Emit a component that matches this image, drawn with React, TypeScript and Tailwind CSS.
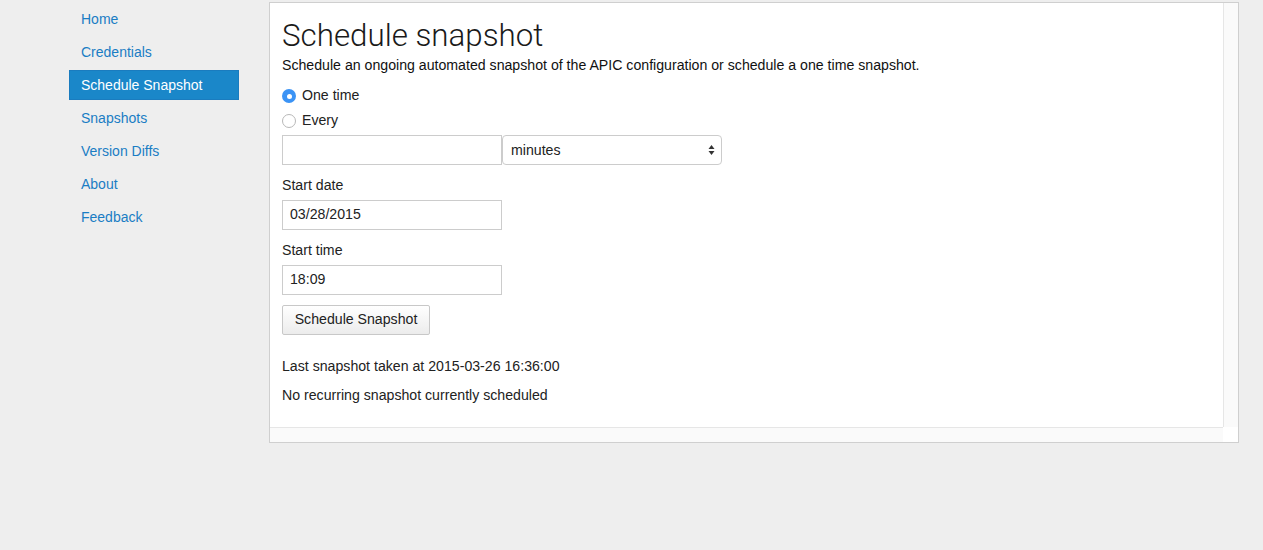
import React from "react";

const navItems = ["Home", "Credentials", "Schedule Snapshot", "Snapshots", "Version Diffs", "About", "Feedback"];

export default function App() {
  return (
    <div className="w-[1263px] h-[550px] bg-[#eeeeee] flex items-start text-[14px] text-[#222]" style={{ fontFamily: '"Liberation Sans", Arial, sans-serif' }}>
      <nav className="w-[170px] ml-[69px] mt-[4px] flex flex-col gap-[3px]">
        {navItems.map((n) =>
          n === "Schedule Snapshot" ? (
            <div key={n} className="h-[30px] flex items-center pl-[11px] bg-[#1a87c9] text-white border border-[#1a7cbf]">
              {n}
            </div>
          ) : (
            <div key={n} className="h-[30px] flex items-center pl-[12px] text-[#1a7dc4]">
              {n}
            </div>
          )
        )}
      </nav>
      <div className="ml-[30px] mt-[2px] w-[970px] h-[441px] border border-[#cfcfcf] grid grid-cols-[1fr_15px] grid-rows-[1fr_15px] bg-white">
        <div className="bg-white pl-[12px] pt-[15px] text-[14.15px]">
          <h1 className="text-[31.3px] leading-[35px] font-light text-[#1a1a1a]" style={{ fontFamily: 'Roboto, "Liberation Sans", Arial, sans-serif' }}>
            Schedule snapshot
          </h1>
          <p className="mt-[3px] leading-[18px] text-[#111]">Schedule an ongoing automated snapshot of the APIC configuration or schedule a one time snapshot.</p>
          <div className="mt-[13px] flex items-center h-[18px] gap-[6px]">
            <span className="w-[14px] h-[14px] rounded-full bg-[#3b93f5] flex items-center justify-center">
              <span className="w-[5px] h-[5px] rounded-full bg-white" />
            </span>
            <span>One time</span>
          </div>
          <div className="mt-[7px] flex items-center h-[18px] gap-[6px]">
            <span className="w-[14px] h-[14px] rounded-full bg-white border border-[#b8b8b8]" />
            <span>Every</span>
          </div>
          <div className="mt-[5px] flex">
            <div className="w-[220px] h-[30px] border border-[#cccccc] bg-white" />
            <div className="w-[220px] h-[30px] border border-[#cccccc] rounded-[4px] bg-white flex items-center justify-between pl-[8px] pr-[6px]">
              <span className="mt-[1px]">minutes</span>
              <svg width="7" height="12" viewBox="0 0 7 12">
                <path d="M3.5 1 L6.5 5 L0.5 5 Z" fill="#333" />
                <path d="M3.5 11 L6.5 7 L0.5 7 Z" fill="#333" />
              </svg>
            </div>
          </div>
          <div className="mt-[11px] leading-[18px]">Start date</div>
          <div className="mt-[6px] w-[220px] h-[30px] border border-[#cccccc] flex items-center pl-[7px] text-[#222]">03/28/2015</div>
          <div className="mt-[11px] leading-[18px]">Start time</div>
          <div className="mt-[6px] w-[220px] h-[30px] border border-[#cccccc] flex items-center pl-[7px] text-[#222]">18:09</div>
          <button className="mt-[10px] w-[148px] h-[30px] border border-[#c8c8c8] rounded-[2px] bg-gradient-to-b from-white to-[#ececec] text-[#222] flex items-center justify-center">
            Schedule Snapshot
          </button>
          <div className="mt-[22px] leading-[18px]">Last snapshot taken at 2015-03-26 16:36:00</div>
          <div className="mt-[11px] leading-[18px]">No recurring snapshot currently scheduled</div>
        </div>
        <div className="bg-[#fafafa] border-l border-[#e6e6e6]" />
        <div className="bg-[#fafafa] border-t border-[#e6e6e6]" />
        <div className="bg-white" />
      </div>
    </div>
  );
}
